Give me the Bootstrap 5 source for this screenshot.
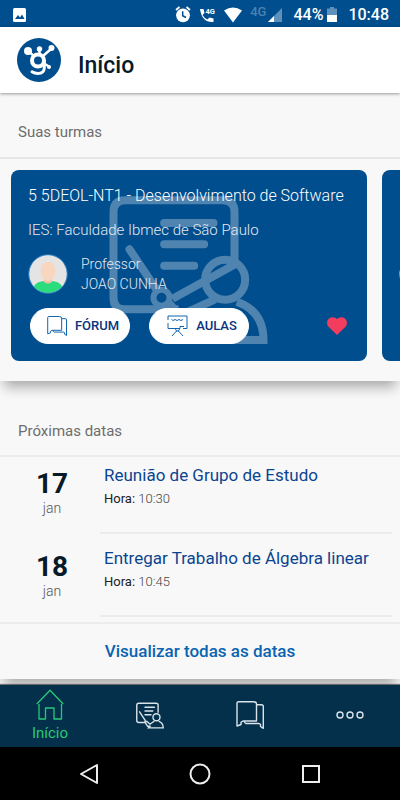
<!DOCTYPE html>
<html lang="pt-BR">
<head>
<meta charset="utf-8">
<meta name="viewport" content="width=device-width, initial-scale=1">
<title>Início</title>
<link rel="stylesheet" href="https://cdn.jsdelivr.net/npm/bootstrap@5.3.0/dist/css/bootstrap.min.css">
<style>
  body { font-family: Roboto, "Liberation Sans", sans-serif; background: #f8f8f8; color: #061a28; }
  svg { display: block; flex: none; }
  .status { background: #004e8d; height: 27px; padding: 2px 11px 0 12px; font-size: 16px; font-weight: 500; line-height: 24px; }
  .status-mini { font-size: 13px; line-height: 12px; color: #4c82b0; padding: 0 2px 5px 0; }
  .status-gap { margin-left: 11px; }
  .app-header { height: 66px; padding: 0 17px 0 16px; gap: 16px; box-shadow: 0 1px 3px rgba(0,0,0,.4); z-index: 2; }
  .app-header h1 { font-size: 23px; line-height: 28px; font-weight: 500; padding-top: 12px; }
  .panel { position: relative; background: #f8f8f8; box-shadow: 0 10px 12px -4px rgba(0,0,0,.32); }
  .panel-title { font-size: 15px; line-height: 20px; font-weight: 400; color: #6d6d6d; }
  .classes { z-index: 1; }
  .classes .panel-title { padding: 29px 18px 15px; border-bottom: 2px solid #e5e5e5; }
  .dates .panel-title { padding: 21px 18px 14px; border-bottom: 2px solid #ececec; }
  .class-strip { gap: 15px; padding: 11px 0 20px 11px; }
  .class-card { flex: 0 0 356px; height: 191px; background: #004e8d; border-radius: 8px; padding: 16px 17px; color: #e3e9f1; }
  .watermark { left: 98px; top: 26px; }
  .class-card h3 { font-size: 16px; line-height: 20px; font-weight: 300; color: #fff; margin-bottom: 14px; }
  .school { font-size: 15px; line-height: 20px; font-weight: 300; margin-bottom: 14px; }
  .teacher { gap: 13px; font-size: 14px; line-height: 20px; font-weight: 300; }
  .btn-pill { --bs-btn-color: #0a3380; --bs-btn-bg: #fff; --bs-btn-border-color: #fff; --bs-btn-hover-bg: #e8eff6; --bs-btn-hover-color: #0a3380;
    width: 100px; height: 36px; font-size: 13px; line-height: 20px; font-weight: 500; gap: 8px; padding: 0 0 0 6px; }
  .btn-pill svg { color: #1265ae; }
  .card-actions { padding: 0 0 0 2px; gap: 19px; margin-top: 14px; }
  .fav { margin-right: 3px; }
  .spacer { height: 19px; }
  .date-col { flex: 0 0 104px; padding-top: 3px; }
  .day { font-size: 28px; line-height: 32px; font-weight: 700; }
  .month { font-size: 14px; line-height: 16px; font-weight: 300; color: #555; }
  .date-row { padding-top: 8px; }
  .date-row + .date-row { padding-top: 14px; }
  .date-info { border-bottom: 2px solid #ececec; margin: 0 8px 0 -4px; padding: 0 0 25px 4px; }
  .date-info a { display: block; font-size: 17px; line-height: 20px; color: #0b4490; }
  .hour { font-size: 13px; line-height: 16px; margin-top: 6px; color: #222; }
  .hour span { font-weight: 300; color: #444; }
  .see-all { border-top: 2px solid #ececec; margin-top: 5px; height: 57px; font-size: 17px; font-weight: 500; color: #0b64b1; }
  .tabs { background: #04304b; height: 62px; padding-bottom: 2px; box-shadow: 0 -1px 1px rgba(0,0,0,.5); z-index: 2; }
  .tabs a { color: #d9e3ea; }
  .tabs a.active { color: #27c978; font-size: 15px; line-height: 18px; }
  .tabs use { stroke-width: 1.4; }
  .sys { background: #000; height: 53px; gap: 90px; }
  .sys .btn { line-height: 0; border: 0; padding: 0; }
</style>
<script src="https://cdn.jsdelivr.net/npm/bootstrap@5.3.0/dist/js/bootstrap.bundle.min.js"></script>
</head>
<body class="d-flex flex-column min-vh-100 overflow-x-hidden">
<svg width="0" height="0" class="position-absolute" aria-hidden="true">
  <symbol id="chat" viewBox="0 0 28 28"><g fill="none" stroke="currentColor" stroke-linejoin="round">
    <path d="M2.500.7H17.500Q20.500.7 20.500 3V20H7L5 21.300V23.500L1 25V2.500Q1 .7 2.500.7Z"/>
    <path d="M20.500 3.700H25.500Q27.300 3.700 27.300 5.500V27.300L24.500 25.500V23.300L23 22.500H10Q8.500 22.300 8.300 20"/></g></symbol>
</svg>

<div class="status d-flex align-items-center text-white">
  <svg width="15" height="14" viewBox="0 0 15 14"><rect x="1" width="13" height="14" rx="1.500" fill="#fff"/><path d="M3 11l3-4 2 2.500L10 6.500 12.500 11z" fill="#004e8d"/></svg>
  <svg class="ms-auto" width="16" height="17" viewBox="0 0 16 17"><circle cx="8" cy="9.300" r="6.900" fill="#fff"/><path d="M1 4 4.500 1M15 4 11.500 1" stroke="#fff" stroke-width="1.800"/><path d="M7.700 5.300V9.700L11 11.500" fill="none" stroke="#004e8d" stroke-width="1.500"/></svg>
  <svg class="ms-2" width="17" height="16" viewBox="0 0 17 16"><path d="M1 2H4.500L5.500 6 3.500 8Q5.500 11.500 8.500 12.500L10.500 10.500 14.500 11.500V15Q3 16 1 2Z" fill="#fff"/><text x="6.500" y="7" font-size="7.500" font-weight="700" fill="#fff">4G</text></svg>
  <svg class="ms-2" width="18" height="16" viewBox="0 0 18 16"><path d="M9 15.500 0 3.500Q9-2.500 18 3.500Z" fill="#fff"/></svg>
  <span class="status-mini ms-2">4G</span>
  <svg width="14" height="14" viewBox="0 0 14 14"><path d="M14 0V14H0Z" fill="#5d90ba"/><path d="M6 8V14H0Z" fill="#fff"/></svg>
  <span class="status-gap">44%</span>
  <svg class="ms-1" width="10" height="15" viewBox="0 0 10 15"><path d="M0 1.500H3V0H7V1.500H10V8H0Z" fill="#5d90ba"/><path d="M0 8H10V15H0Z" fill="#fff"/></svg>
  <span class="status-gap">10:48</span>
</div>

<header class="app-header bg-white d-flex align-items-center position-relative">
  <svg width="46" height="46" viewBox="0 0 46 46"><circle cx="23" cy="23" r="22" fill="#004e8d"/>
    <g fill="none" stroke="#fff"><circle cx="22" cy="23.500" r="6" stroke-width="4"/><path d="M28.300 24V31Q28 36.500 22 36.500 18.500 36.500 16 34.800" stroke-width="3" stroke-linecap="round"/><path d="M12 14 18 19M23.500 12V18M35 12 27 19" stroke-width="2.400"/><path d="M29 27 33 29.500" stroke-width="2.400"/></g>
    <g fill="#fff"><circle cx="12" cy="14" r="4"/><circle cx="23.500" cy="12" r="2.700"/><circle cx="35.500" cy="11" r="3"/><circle cx="33" cy="30" r="2"/></g></svg>
  <h1 class="mb-0">Início</h1>
</header>

<main class="flex-grow-1 overflow-hidden">
  <section class="panel classes">
    <h2 class="panel-title mb-0">Suas turmas</h2>
    <div class="class-strip d-flex overflow-hidden">
      <article class="class-card position-relative">
        <svg class="watermark position-absolute" width="159" height="148" viewBox="27 30 476 444" fill="none" stroke="#4f84b1" stroke-width="24" aria-hidden="true">
          <path d="M403 225V78Q403 43 368 43H75Q40 43 40 78V335Q40 370 75 370H235"/>
          <path d="M192 111H340M192 175H312M192 239H282M88 190 170 312" stroke-linecap="round"/>
          <circle cx="184" cy="335" r="24" stroke-width="18"/><path d="M205 350 250 400M217 338 405 235M225 395 345 340"/>
          <circle cx="375" cy="281" r="60"/><path d="M410 347Q490 375 490 462H380"/>
        </svg>
        <div class="position-relative">
          <h3 class="text-nowrap">5 5DEOL-NT1 - Desenvolvimento de Software</h3>
          <p class="school">IES: Faculdade Ibmec de São Paulo</p>
          <div class="teacher d-flex align-items-center">
            <svg width="40" height="40" viewBox="0 0 40 40"><defs><clipPath id="face"><circle cx="20" cy="20" r="19"/></clipPath></defs><g clip-path="url(#face)"><path d="M0 0H40V40H0Z" fill="#e4e4e4"/><path d="M3 40Q4 28 16 27H24Q36 28 37 40Z" fill="#2bdc7c"/><path d="M16 23H24V28Q20 31 16 28Z" fill="#efc1a5"/><path d="M13 15Q13 8 20 8T27 15Q28 17 27 20 25 27 20 27T13 20Q12 17 13 15Z" fill="#f9d6bf"/></g><circle cx="20" cy="20" r="19.300" fill="none" stroke="#3b8ed0" stroke-width=".8"/></svg>
            <div><div>Professor</div><div>JOAO CUNHA</div></div>
          </div>
          <div class="card-actions d-flex align-items-center">
            <button type="button" class="btn btn-pill rounded-pill d-flex align-items-center justify-content-center"><svg width="20" height="20"><use href="#chat" stroke-width="1.400"/></svg>FÓRUM</button>
            <button type="button" class="btn btn-pill rounded-pill d-flex align-items-center justify-content-center"><svg width="21" height="22" viewBox="0 0 21 22" fill="none" stroke="currentColor"><path d="M1 5V1H20V13.500H16M1 8V13.500H13V11.500H17M4.500 4.500 6 5.500 8 4.500 10 5.500 12 4.500 14 5.500 16 4.500M8.500 14 9.500 16 5 21M12.500 14 11.500 16 16 21M9 16H12"/></svg>AULAS</button>
            <button type="button" class="btn fav p-0 border-0 ms-auto" aria-label="Favorito"><svg width="20" height="18" viewBox="0 0 20 18"><path d="M10 18 1.500 9.800C-.5 7.500-.3 4 1.500 2 4-.5 7.800-.3 10 2.200 12.200-.3 16-.5 18.500 2 20.300 4 20.500 7.500 18.500 9.800Z" fill="#f23d5e"/></svg></button>
          </div>
        </div>
      </article>
      <article class="class-card">
        <h3>5 5DEOL-NT1</h3>
        <p class="school">IES: Faculdade</p>
        <svg width="40" height="40" viewBox="0 0 40 40"><circle cx="20" cy="20" r="19.500" fill="#e4e4e4"/></svg>
      </article>
    </div>
  </section>
  <div class="spacer"></div>
  <section class="panel dates">
    <h2 class="panel-title mb-0">Próximas datas</h2>
    <div class="date-row d-flex">
      <div class="date-col text-center"><div class="day">17</div><div class="month">jan</div></div>
      <div class="date-info flex-grow-1"><a href="#" class="text-decoration-none">Reunião de Grupo de Estudo</a><div class="hour">Hora: <span>10:30</span></div></div>
    </div>
    <div class="date-row d-flex">
      <div class="date-col text-center"><div class="day">18</div><div class="month">jan</div></div>
      <div class="date-info flex-grow-1"><a href="#" class="text-decoration-none">Entregar Trabalho de Álgebra linear</a><div class="hour">Hora: <span>10:45</span></div></div>
    </div>
    <a href="#" class="see-all d-flex align-items-center justify-content-center text-decoration-none">Visualizar todas as datas</a>
  </section>
</main>

<nav class="tabs d-flex align-items-center position-relative">
  <a href="#" class="active col-3 d-flex flex-column align-items-center text-decoration-none"><svg width="28" height="31" viewBox="0 0 28 31" fill="none" stroke="currentColor" stroke-width="1.300" stroke-linejoin="round"><path d="M.8 15 14 1.200 27.200 15M3 15V30H9.500V19H18V30H25.500V15"/></svg><span class="pt-1">Início</span></a>
  <a href="#" class="col-3 d-flex justify-content-center" aria-label="Turmas"><svg width="28" height="27" viewBox="27 30 476 444" fill="none" stroke="currentColor" stroke-width="24"><path d="M403 205V78Q403 43 368 43H75Q40 43 40 78V335Q40 370 75 370H180"/><path d="M180 111H340M180 175H312M180 239H282M88 190 200 360" stroke-linecap="round"/><path d="M170 350 225 435H275M205 345 265 400 340 345M410 347Q490 375 490 462H240L275 425"/><circle cx="375" cy="281" r="60"/></svg></a>
  <a href="#" class="col-3 d-flex justify-content-center" aria-label="Fórum"><svg width="28" height="28"><use href="#chat"/></svg></a>
  <a href="#" class="col-3 d-flex justify-content-center" aria-label="Mais"><svg width="28" height="8" viewBox="0 0 28 8" fill="none" stroke="currentColor" stroke-width="1.400"><circle cx="4" cy="4" r="3"/><circle cx="14" cy="4" r="3"/><circle cx="24" cy="4" r="3"/></svg></a>
</nav>
<footer class="sys d-flex align-items-center justify-content-center">
  <button class="btn" type="button" aria-label="Voltar"><svg width="20" height="22" viewBox="0 0 20 22" fill="none" stroke="#eee" stroke-width="2" stroke-linejoin="round"><path d="M18 2V20L2 11Z"/></svg></button>
  <button class="btn" type="button" aria-label="Tela inicial"><svg width="22" height="22" viewBox="0 0 22 22" fill="none" stroke="#eee" stroke-width="2"><circle cx="11" cy="11" r="9.500"/></svg></button>
  <button class="btn" type="button" aria-label="Recentes"><svg width="20" height="20" viewBox="0 0 20 20" fill="none" stroke="#eee" stroke-width="2"><rect x="2" y="2" width="16" height="16"/></svg></button>
</footer>
</body>
</html>
